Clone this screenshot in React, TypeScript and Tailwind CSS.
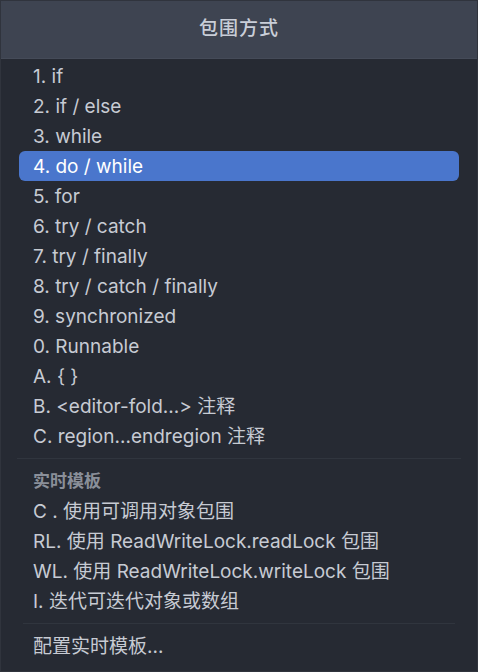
const items = [
  "1. if",
  "2. if / else",
  "3. while",
  "4. do / while",
  "5. for",
  "6. try / catch",
  "7. try / finally",
  "8. try / catch / finally",
  "9. synchronized",
  "0. Runnable",
  "A. { }",
  "B. <editor-fold...> 注释",
  "C. region...endregion 注释",
];

const templates = [
  "C . 使用可调用对象包围",
  "RL. 使用 ReadWriteLock.readLock 包围",
  "WL. 使用 ReadWriteLock.writeLock 包围",
  "I. 迭代可迭代对象或数组",
];

const font = { fontFamily: "Inter, 'Noto Sans CJK SC', sans-serif" };

function Row({ text, selected }: { text: string; selected?: boolean }) {
  return (
    <div
      className={
        "h-[30px] flex items-center px-[14px] pt-[2px] rounded-[6px] " +
        (selected ? "bg-[#4a76cc] text-white" : "text-[#c7cbd3]")
      }
    >
      {text}
    </div>
  );
}

export default function App() {
  return (
    <div
      className="w-[478px] h-[672px] bg-[#262a33] border border-[#30343d] flex flex-col text-[19px] overflow-hidden"
      style={font}
    >
      <div className="h-[58px] shrink-0 bg-[#3e4451] border-b border-[#454b58] flex items-center justify-center text-[#c9ced8] text-[19px] font-medium tracking-[1px]">
        包围方式
      </div>
      <div className="px-[18px] pt-[2px]">
        {items.map((t, i) => (
          <Row key={t} text={t} selected={i === 3} />
        ))}
      </div>
      <div className="h-[15px] flex items-center px-[16px]">
        <div className="h-px w-full bg-[#30353e]" />
      </div>
      <div className="px-[18px]">
        <div className="h-[30px] flex items-center px-[14px] pt-[2px] text-[#8a8f99] text-[17px] font-bold">
          实时模板
        </div>
        {templates.map((t) => (
          <Row key={t} text={t} />
        ))}
      </div>
      <div className="h-[15px] flex items-center px-[22px]">
        <div className="h-px w-full bg-[#30353e]" />
      </div>
      <div className="px-[18px]">
        <Row text="配置实时模板..." />
      </div>
    </div>
  );
}
